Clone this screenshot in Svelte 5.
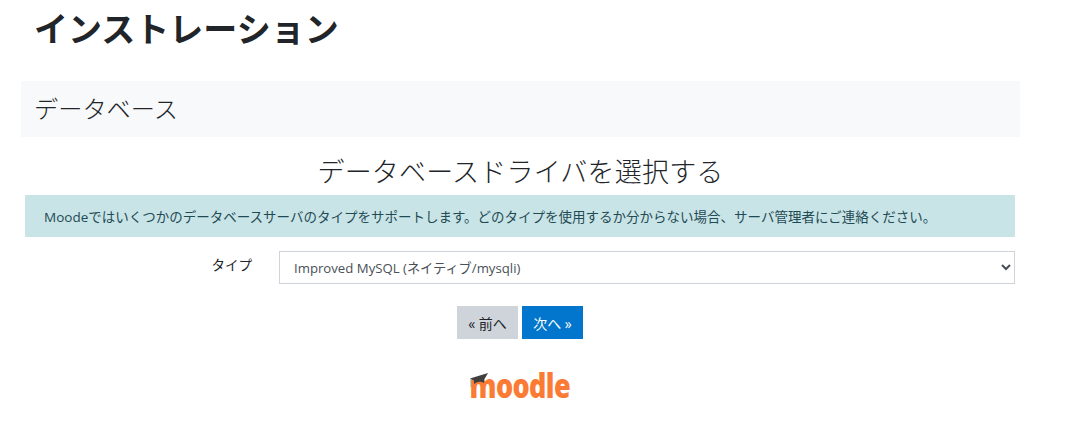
<script>
  const title = 'インストレーション';
</script>

<div class="page">
  <h1>{title}</h1>
  <h2>データベース</h2>
  <h3>データベースドライバを選択する</h3>
  <div class="alert">Moodeではいくつかのデータベースサーバのタイプをサポートします。どのタイプを使用するか分からない場合、サーバ管理者にご連絡ください。</div>
  <div class="row">
    <label for="dbtype">タイプ</label>
    <select id="dbtype">
      <option>Improved MySQL (ネイティブ/mysqli)</option>
    </select>
  </div>
  <div class="buttons">
    <button class="prev">« 前へ</button>
    <button class="next">次へ »</button>
  </div>
  <div class="logo">
    <span class="word">moodle</span>
    <svg class="hat" width="20" height="16" viewBox="0 0 20 16" aria-hidden="true">
      <path d="M0 5.5 L18 0 L14.5 6 L14 10 Q9 7 4 11 L4 7.5 Z" fill="#3f3f3f"/>
      <path d="M1 6 L1 14" stroke="#999" stroke-width="1"/>
    </svg>
  </div>
</div>

<style>
  :global(body) {
    margin: 0;
    background: #fff;
  }
  .page {
    width: 1077px;
    height: 443px;
    box-sizing: border-box;
    padding: 0 57px 0 21px;
    font-family: "Open Sans", "Noto Sans CJK JP", sans-serif;
    color: #212529;
    overflow: hidden;
  }
  h1 {
    margin: 0;
    padding: 8px 0 0 13px;
    height: 81px;
    box-sizing: border-box;
    font-size: 34px;
    font-weight: 700;
    line-height: 42px;
  }
  h2 {
    margin: 0;
    padding: 0 13px;
    height: 56px;
    background: #f8f9fa;
    font-size: 24.2px;
    font-weight: 300;
    line-height: 56px;
  }
  h3 {
    margin: 0;
    padding-top: 16px;
    height: 58px;
    box-sizing: border-box;
    text-align: center;
    font-size: 27px;
    font-weight: 300;
    line-height: 38px;
    letter-spacing: 0.2px;
  }
  .alert {
    margin: 0 5px 0 4px;
    height: 42px;
    padding-left: 19px;
    background: #c9e4e7;
    color: #1f4b54;
    font-size: 13.5px;
    line-height: 44px;
    white-space: nowrap;
  }
  .row {
    display: flex;
    margin-top: 14px;
    height: 33px;
  }
  label {
    width: 231px;
    font-size: 13.5px;
    line-height: 29px;
    text-align: right;
    margin-right: 27px;
  }
  select {
    width: 736px;
    height: 33px;
    padding: 0 10px;
    border: 1px solid #ced4da;
    background: #fff;
    color: #495057;
    font: inherit;
    font-size: 13.2px;
  }
  .buttons {
    display: flex;
    justify-content: center;
    gap: 4px;
    margin: 22px 1px 0 0;
  }
  button {
    width: 61px;
    height: 33px;
    padding: 0;
    border: 0;
    font-family: inherit;
    font-size: 14px;
  }
  .prev {
    background: #ced4da;
    color: #212529;
  }
  .next {
    background: #0176cc;
    color: #fff;
  }
  .logo {
    position: relative;
    width: 100px;
    height: 36px;
    margin: 27px auto 0;
    text-align: right;
    left: -1px;
  }
  .word {
    display: inline-block;
    font-family: "Open Sans", sans-serif;
    font-weight: 800;
    font-size: 27px;
    line-height: 36px;
    color: #fb7b34;
    letter-spacing: -0.6px;
    transform: scaleY(1.22);
    transform-origin: 50% 68%;
    position: relative;
    top: 3px;
  }
  .hat {
    position: absolute;
    left: 0;
    top: 7px;
  }
</style>
